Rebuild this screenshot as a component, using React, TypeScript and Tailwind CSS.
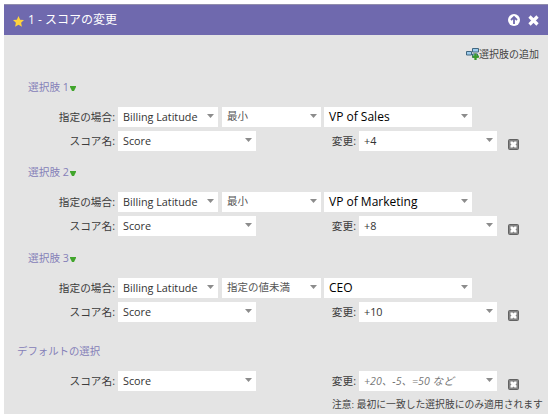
import React from "react";

const JP = "font-['Noto_Sans_CJK_JP',sans-serif]";
const LATIN = "font-['Open_Sans','Noto_Sans_CJK_JP',sans-serif]";

function Caret() {
  return (
    <svg className="mb-[3px] h-1 w-[7px] shrink-0" viewBox="0 0 7 4">
      <path d="M0 0h7L3.5 4z" fill="#8c8c8c" />
    </svg>
  );
}

function Field({ width, children }: { width: string; children: React.ReactNode }) {
  return (
    <div className={`flex h-5 shrink-0 items-center justify-between bg-white pr-1 pl-[5px] ${width}`}>
      {children}
      <Caret />
    </div>
  );
}

function Label({ width, text }: { width: string; text: string }) {
  return (
    <span className={`shrink-0 pr-[3px] text-right text-[10.7px] leading-5 whitespace-nowrap text-[#3c3c3c] ${LATIN} ${width}`}>
      {text}
    </span>
  );
}

function Value({ children }: { children: React.ReactNode }) {
  return <span className={`text-[10.8px] leading-5 whitespace-nowrap text-[#333] ${LATIN}`}>{children}</span>;
}

function RemoveIcon() {
  return (
    <svg className="mt-2 ml-[11px] size-[11px] shrink-0" viewBox="0 0 11 11">
      <rect x=".5" y=".5" width="10" height="10" rx="1" fill="#858585" stroke="#626262" />
      <path d="M2.500 2.500h2l1 1 1-1h2v2l-1 1 1 1v2h-2l-1-1-1 1h-2v-2l1-1-1-1z" fill="#fff" />
    </svg>
  );
}

function ScoreRow({ change, hint }: { change?: string; hint?: string }) {
  return (
    <div className="flex h-5">
      <Label width="w-[114px]" text="スコア名:" />
      <Field width="w-[138px]">
        <Value>Score</Value>
      </Field>
      <Label width="w-[103px]" text="変更:" />
      <Field width="w-[138px]">
        {hint ? (
          <span className={`text-[10.6px] leading-5 whitespace-nowrap text-[#777] italic ${LATIN}`}>{hint}</span>
        ) : (
          <Value>{change}</Value>
        )}
      </Field>
      <RemoveIcon />
    </div>
  );
}

interface ChoiceProps {
  n: number;
  op: string;
  value: string;
  change: string;
  height: string;
}

function Choice({ n, op, value, change, height }: ChoiceProps) {
  return (
    <section className={height}>
      <div className={`flex h-5 items-center pl-6 text-[10.7px] whitespace-nowrap text-[#8580b8] ${LATIN}`}>
        <span className="-mt-px">選択肢 {n}</span>
        <svg className="ml-px h-[5px] w-1.5" viewBox="0 0 6 5">
          <path d="M0 0h6v1L4 5H2L0 1z" fill="#41a52c" />
        </svg>
      </div>
      <div className="mt-[9px] flex h-5">
        <Label width="w-[114px]" text="指定の場合:" />
        <Field width="w-[100px]">
          <Value>Billing Latitude</Value>
        </Field>
        <div className="w-1" />
        <Field width="w-[99px]">
          <span className={`-mt-0.5 text-[10.5px] leading-5 whitespace-nowrap text-[#555] ${JP}`}>{op}</span>
        </Field>
        <div className="w-[3px]" />
        <Field width="w-[148px]">
          <span className={`text-[12px] leading-5 whitespace-nowrap text-black ${LATIN}`}>{value}</span>
        </Field>
      </div>
      <div className="mt-1">
        <ScoreRow change={change} />
      </div>
    </section>
  );
}

export default function App() {
  return (
    <div className="h-[414px] w-[549px] overflow-hidden bg-white pt-1 pl-1">
      <main className="h-[410px] w-[544px] bg-[#e4e4e4]">
        <header className="flex h-[31px] items-center border-t border-[#918dac] bg-[#6f69ae] pr-[9px] pl-[9px] text-white">
          <svg className="mt-0.5 size-[11px]" viewBox="0 0 24 24">
            <path d="M12 0l3.600 8 8.400.9-6.300 5.800 1.800 8.600L12 19l-7.500 4.300 1.800-8.600L0 8.900 8.400 8z" fill="#ffd33c" />
          </svg>
          <h1 className={`ml-1 text-[12px] whitespace-nowrap ${LATIN}`}>1 - スコアの変更</h1>
          <svg className="ml-auto size-3" viewBox="0 0 12 12">
            <circle cx="6" cy="6" r="6" fill="#fff" />
            <path d="M6 10V3M3 6l3-3 3 3" fill="none" stroke="#6f69ae" strokeWidth="1.8" />
          </svg>
          <svg className="ml-2 size-[11px]" viewBox="0 0 11 11">
            <path d="M1.500 1.500l8 8M9.500 1.500l-8 8" stroke="#fff" strokeWidth="3.200" />
          </svg>
        </header>
        <div className="flex h-[43px] items-center justify-end pr-[9px] pb-[6px]">
          <svg className="mt-px h-3 w-[13px]" viewBox="0 0 13 12">
            <path d="M.5 3.500h5v3.500h-5zM6.500.5h6V4h-6zM6.500 6h5v3.500h-5z" fill="#9ccbed" stroke="#41667f" />
            <path d="M9.500 5.500V12M6.500 8.700H13" stroke="#3b9a2a" strokeWidth="2.300" />
          </svg>
          <span className={`text-[10px] whitespace-nowrap text-[#444] ${JP}`}>選択肢の追加</span>
        </div>
        <Choice n={1} op="最小" value="VP of Sales" change="+4" height="h-[85px]" />
        <Choice n={2} op="最小" value="VP of Marketing" change="+8" height="h-[86px]" />
        <Choice n={3} op="指定の値未満" value="CEO" change="+10" height="h-[92px]" />
        <section>
          <h2 className={`h-5 pl-[13px] text-[10.4px] leading-5 text-[#8580b8] ${JP}`}>デフォルトの選択</h2>
          <div className="mt-2.5">
            <ScoreRow hint="+20、-5、=50 など" />
          </div>
          <p className={`mt-1 pl-[328px] text-[9.8px] leading-5 whitespace-nowrap text-[#444] ${LATIN}`}>
            注意: 最初に一致した選択肢にのみ適用されます
          </p>
        </section>
      </main>
    </div>
  );
}
